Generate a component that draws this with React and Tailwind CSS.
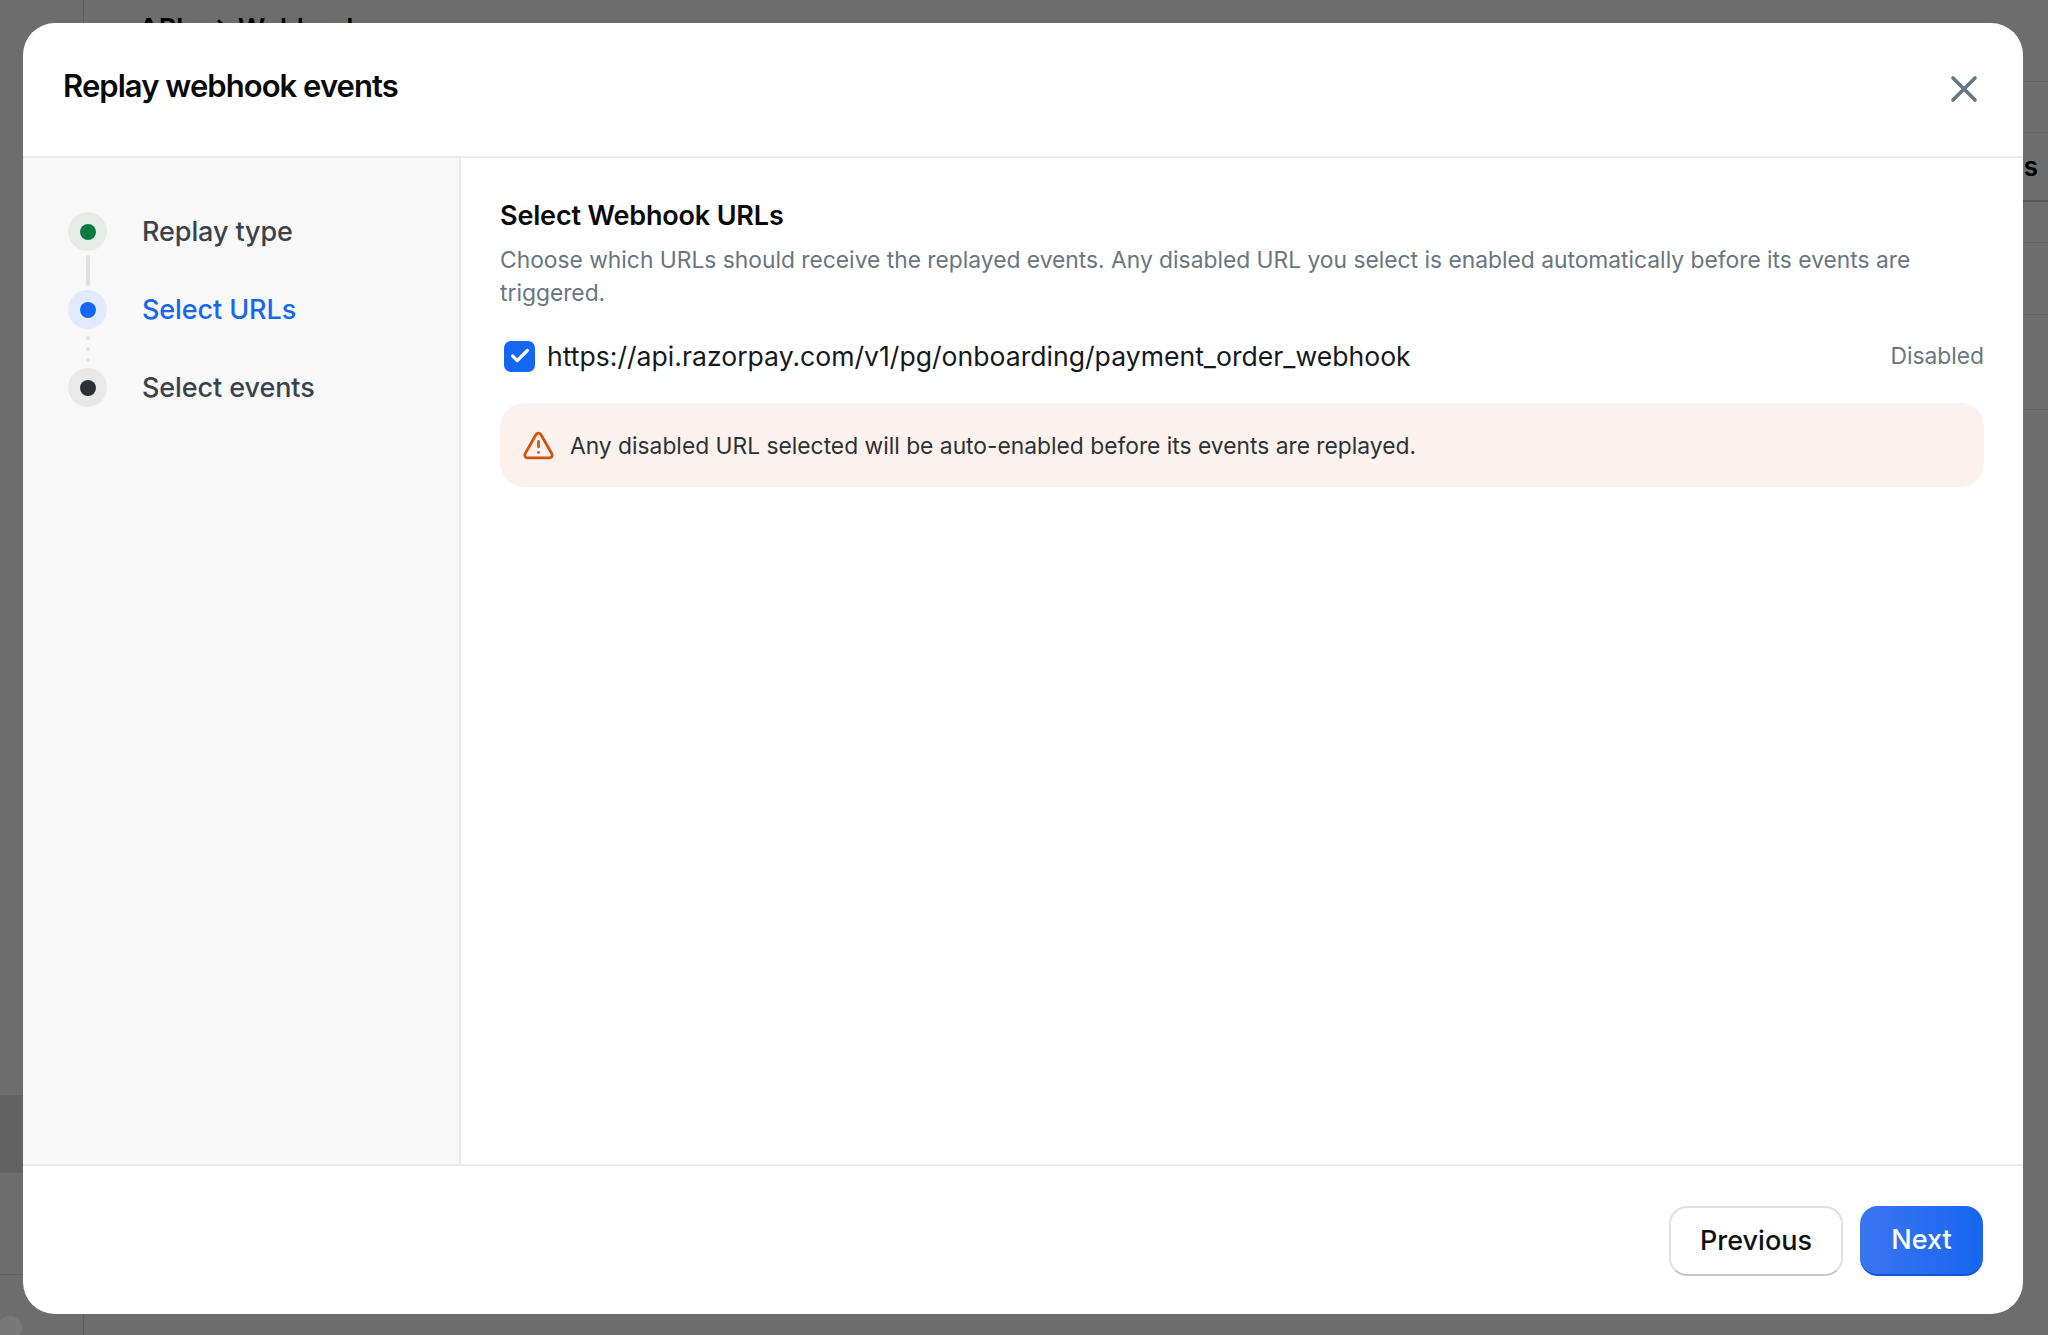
import { Check, TriangleAlert, X } from 'lucide-react';

const STEPS = [
  { label: 'Replay type', ring: 'bg-[#e5ede9]', dot: 'bg-[#0a7a3d]', text: 'text-[#3a4349]' },
  { label: 'Select URLs', ring: 'bg-[#e3eafb]', dot: 'bg-[#1566f1]', text: 'text-[#1566f1]' },
  { label: 'Select events', ring: 'bg-[#e9e9e9]', dot: 'bg-[#2b3237]', text: 'text-[#3a4349]' },
];

function Connector({ dotted }) {
  if (dotted) {
    return (
      <div className="flex h-[39px] w-[39px] flex-col items-center justify-center gap-[7px]">
        <span className="size-[4px] rounded-full bg-[#e2e2e2]" />
        <span className="size-[4px] rounded-full bg-[#e2e2e2]" />
        <span className="size-[4px] rounded-full bg-[#e2e2e2]" />
      </div>
    );
  }
  return (
    <div className="flex h-[39px] w-[39px] items-center justify-center">
      <span className="h-[31px] w-[4px] rounded-full bg-[#e0e1e2]" />
    </div>
  );
}

function Stepper() {
  return (
    <aside className="flex w-[438px] shrink-0 flex-col border-r-2 border-[#ebebeb] bg-[#f8f8f8] pl-[45px] pt-[54px]">
      {STEPS.map((s, i) => (
        <div key={s.label}>
          <div className="flex h-[39px] items-center gap-[35px]">
            <span className={`flex size-[39px] items-center justify-center rounded-full ${s.ring}`}>
              <span className={`size-[16px] rounded-full ${s.dot}`} />
            </span>
            <span className={`pt-[2px] text-[27px] font-medium tracking-[-0.1px] ${s.text}`}>{s.label}</span>
          </div>
          {i < STEPS.length - 1 && <Connector dotted={i === 1} />}
        </div>
      ))}
    </aside>
  );
}

function Backdrop() {
  return (
    <div className="flex h-full w-full">
      <div className="relative flex w-[84px] shrink-0 flex-col border-r border-[#5f5f5f] pt-[1095px]">
        <div className="h-[78px] bg-[#636363]" />
        <div className="mt-[101px] border-t border-[#5f5f5f]" />
        <span className="absolute left-[-2px] top-[1316px] size-[24px] rounded-full bg-[#787878]" />
      </div>
      <div className="flex min-w-0 flex-1 flex-col">
        <div className="h-[82px] border-b border-[#636363] pl-[55px] text-[27px] font-semibold leading-[58px] text-black">
          APIs → Webhooks
        </div>
        <div className="h-[51px] border-b border-[#636363]" />
        <div className="flex h-[69px] items-center justify-end border-b-2 border-[#555555] pr-[10px] text-[26px] font-semibold text-black">
          s
        </div>
        <div className="h-[41px] border-b border-[#636363]" />
        <div className="h-[72px] border-b border-[#636363]" />
        <div className="h-[95px] border-b border-[#636363]" />
      </div>
    </div>
  );
}

export default function App() {
  return (
    <div className="relative h-[1335px] w-[2048px] overflow-hidden bg-[#6d6d6d] font-['Inter',sans-serif]">
      <Backdrop />
      <div className="absolute left-[23px] top-[23px] flex h-[1291px] w-[2000px] flex-col overflow-hidden rounded-[32px] bg-white">
        <header className="flex h-[135px] shrink-0 items-start justify-between border-b-2 border-[#ebebeb] pl-[40px] pr-[37px]">
          <h1 className="mt-[43px] text-[31px] font-semibold leading-[40px] tracking-[-0.95px] text-[#0a0a0a]">
            Replay webhook events
          </h1>
          <button className="mt-[44px] text-[#68767f]">
            <X size={44} strokeWidth={2} />
          </button>
        </header>

        <div className="flex min-h-0 flex-1">
          <Stepper />
          <main className="min-w-0 flex-1 pl-[39px] pr-[39px] pt-[40px]">
            <h2 className="text-[27px] font-semibold leading-[36px] tracking-[-0.17px] text-[#0a0a0a]">Select Webhook URLs</h2>
            <p className="mt-[9px] text-[22.8px] leading-[33px] text-[#68767f]">
              Choose which URLs should receive the replayed events. Any disabled URL you select is enabled automatically before its events are triggered.
            </p>
            <div className="mt-[27px] flex h-[40px] items-center justify-between">
              <label className="flex items-center gap-[12px] pl-[4px]">
                <span className="flex size-[31px] items-center justify-center rounded-[7px] bg-[#1566f1] text-white">
                  <Check size={22} strokeWidth={3.5} />
                </span>
                <span className="pt-[1px] text-[26.6px] text-[#15191c]">https://api.razorpay.com/v1/pg/onboarding/payment_order_webhook</span>
              </label>
              <span className="text-[22.8px] text-[#68767f]">Disabled</span>
            </div>
            <div className="mt-[27px] flex h-[84px] items-center gap-[15px] rounded-[24px] bg-[#fcf1ec] pl-[22px]">
              <TriangleAlert size={33} strokeWidth={2} className="text-[#cf5410]" />
              <span className="pt-[3px] text-[22.8px] text-[#2b3237]">Any disabled URL selected will be auto-enabled before its events are replayed.</span>
            </div>
          </main>
        </div>

        <footer className="flex h-[150px] shrink-0 items-start justify-end gap-[17px] border-t-2 border-[#ebebeb] pr-[40px] pt-[40px]">
          <button className="h-[70px] w-[174px] rounded-[18px] border-2 border-[#e0e0e0] border-b-[#c8c8c8] bg-white text-[27px] font-medium text-[#0f1113]">
            Previous
          </button>
          <button className="h-[70px] w-[123px] rounded-[18px] border-b-2 border-[#1458d0] bg-gradient-to-r from-[#3a75f0] to-[#1566f1] text-[27px] font-medium text-white">
            Next
          </button>
        </footer>
      </div>
    </div>
  );
}
